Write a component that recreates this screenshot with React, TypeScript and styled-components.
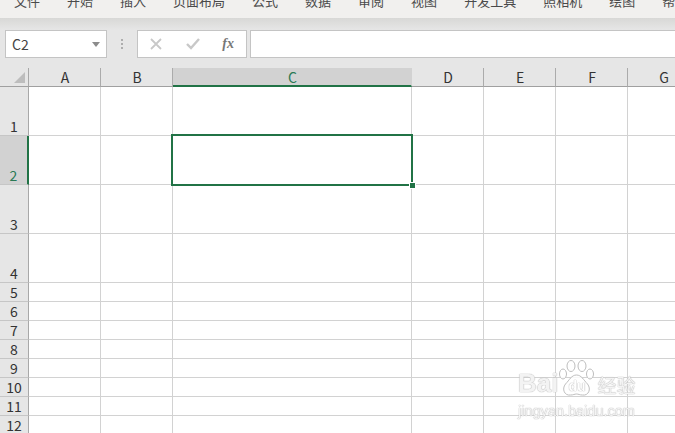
import React from "react";
import styled, { createGlobalStyle } from "styled-components";

const Global = createGlobalStyle`
  html, body { margin: 0; padding: 0; background: #e6e6e6; }
  #root { width: 675px; height: 433px; overflow: hidden; }
`;

const Page = styled.div`
  position: relative;
  width: 675px;
  height: 433px;
  overflow: hidden;
  display: flex;
  flex-direction: column;
  background: #e6e6e6;
  font-family: "Noto Sans CJK SC", "Liberation Sans", sans-serif;
`;

const Ribbon = styled.div`
  height: 18px;
  flex: none;
  box-sizing: border-box;
  background: #f1f0ee;
  display: flex;
  align-items: flex-end;
  gap: 27px;
  padding: 0 0 8px 14px;
  overflow: hidden;
`;

const Tab = styled.span`
  flex: none;
  font-size: 13px;
  line-height: 18px;
  color: #4a4a4a;
`;

const Shade = styled.div`
  height: 12px;
  flex: none;
  background: linear-gradient(#d8d8d6, #e6e6e6);
`;

const FormulaBar = styled.div`
  height: 28px;
  flex: none;
  display: flex;
  padding-left: 5px;
  margin-right: -3px;
`;

const Field = styled.div<{ $w?: number }>`
  box-sizing: border-box;
  height: 28px;
  width: ${(p) => (p.$w ? `${p.$w}px` : "auto")};
  flex: ${(p) => (p.$w ? "none" : "1")};
  background: #fff;
  border: 1px solid #c4c4c4;
  display: flex;
  align-items: center;
`;

const NameBox = styled(Field)`
  justify-content: space-between;
  padding: 0 5px 0 6px;
  font-family: "Noto Sans CJK SC", "Liberation Sans", sans-serif;
  font-size: 14px;
  color: #444;
`;

const Caret = styled.span`
  width: 0;
  height: 0;
  border-left: 4px solid transparent;
  border-right: 4px solid transparent;
  border-top: 5px solid #8c8c8c;
  margin-right: 1px;
`;

const Grip = styled.div`
  width: 31px;
  flex: none;
  display: flex;
  flex-direction: column;
  align-items: center;
  justify-content: center;
  gap: 2px;
  margin-left: -1px;
`;

const GripDot = styled.span`
  width: 2px;
  height: 2px;
  background: #adadad;
`;

const FxBox = styled(Field)`
  justify-content: space-between;
  padding: 0 12px 0 11px;
  margin-right: 3px;
`;

const Fx = styled.span`
  font-family: "Liberation Serif", serif;
  font-style: italic;
  font-weight: 700;
  font-size: 14px;
  color: #777;
`;

const SheetGap = styled.div`
  height: 10px;
  flex: none;
`;

const Sheet = styled.div`
  display: grid;
  grid-template-columns: 29px 72px 72px 239px 72px 72px 72px 72px;
  grid-template-rows: 19px repeat(4, 49px) repeat(8, 19px);
  flex: none;
  background: #fff;
  font-family: "Noto Sans CJK SC", "Liberation Sans", sans-serif;
`;

const Corner = styled.div`
  box-sizing: border-box;
  background: #e6e6e6;
  border-right: 1px solid #a8a8a8;
  border-bottom: 1px solid #a0a0a0;
  display: flex;
  align-items: flex-start;
  justify-content: flex-end;
  padding: 4px 3px 0 0;
`;

const CornerMark = styled.span`
  width: 11px;
  height: 11px;
  background: #bdbdbd;
  clip-path: polygon(100% 0, 100% 100%, 0 100%);
`;

const ColHead = styled.div<{ $active?: boolean }>`
  box-sizing: border-box;
  background: ${(p) => (p.$active ? "#d2d2d2" : "#e6e6e6")};
  border-right: 1px solid ${(p) => (p.$active ? "#d2d2d2" : "#ababab")};
  border-bottom: ${(p) => (p.$active ? "2px solid #217346" : "1px solid #a0a0a0")};
  color: ${(p) => (p.$active ? "#2a7a55" : "#333")};
  font-size: 14px;
  line-height: 19px;
  text-align: center;
  padding-left: 1px;
`;

const RowHead = styled.div<{ $active?: boolean }>`
  box-sizing: border-box;
  background: ${(p) => (p.$active ? "#d2d2d2" : "#e6e6e6")};
  border-right: ${(p) => (p.$active ? "2px solid #217346" : "1px solid #a8a8a8")};
  border-bottom: 1px solid #c6c6c6;
  color: ${(p) => (p.$active ? "#2a7a55" : "#333")};
  font-size: 14px;
  line-height: 18px;
  display: flex;
  align-items: flex-end;
  justify-content: center;
`;

const Cell = styled.div`
  position: relative;
  box-sizing: border-box;
  border-right: 1px solid #d2d2d2;
  border-bottom: 1px solid #d2d2d2;
`;

const Selection = styled.div`
  position: absolute;
  left: -2px;
  top: -2px;
  right: -2px;
  bottom: -2px;
  box-sizing: border-box;
  border: 2px solid #217346;
  z-index: 2;
`;

const Handle = styled.span`
  position: absolute;
  right: -4px;
  bottom: -4px;
  width: 5px;
  height: 5px;
  background: #217346;
  outline: 1px solid #fff;
`;

const Watermark = styled.div`
  position: absolute;
  left: 518px;
  top: 360px;
  width: 122px;
  height: 60px;
  z-index: 3;
  filter: blur(0.4px);
`;

const WordRow = styled.div`
  display: flex;
  align-items: flex-end;
  height: 38px;
`;

const Brand = styled.span`
  font-family: "Liberation Sans", sans-serif;
  font-weight: 700;
  font-size: 26px;
  line-height: 30px;
  color: rgba(255, 255, 255, 0.85);
  text-shadow: 0 0 1px #b0b0b0, 0 0 1px #b0b0b0;
`;

const Jing = styled.span`
  font-family: "Noto Sans CJK SC", sans-serif;
  font-size: 19px;
  line-height: 26px;
  margin-left: 2px;
  color: rgba(255, 255, 255, 0.85);
  text-shadow: 0 0 1px #b0b0b0, 0 0 1px #b0b0b0;
`;

const PawWrap = styled.div`
  position: relative;
  width: 37px;
  height: 38px;
  flex: none;
`;

const PawText = styled.span`
  position: absolute;
  left: 0;
  right: 0;
  bottom: 5px;
  text-align: center;
  font-family: "Liberation Sans", sans-serif;
  font-weight: 700;
  font-size: 14px;
  line-height: 14px;
  color: #fff;
  text-shadow: 0 0 1px #b0b0b0, 0 0 1px #b0b0b0;
`;

const Url = styled.div`
  font-family: "Liberation Sans", sans-serif;
  font-size: 14.5px;
  line-height: 16px;
  margin-top: 5px;
  white-space: nowrap;
  color: rgba(255, 255, 255, 0.85);
  text-shadow: 0 0 1px #b4b4b4, 0 0 1px #b4b4b4;
`;

const tabs = ["文件", "开始", "插入", "页面布局", "公式", "数据", "审阅", "视图", "开发工具", "照相机", "绘图", "帮助"];
const cols = ["A", "B", "C", "D", "E", "F", "G"];
const rows = [1, 2, 3, 4, 5, 6, 7, 8, 9, 10, 11, 12];

export default function App() {
  return (
    <Page>
      <Global />
      <Ribbon>
        {tabs.map((t) => (
          <Tab key={t}>{t}</Tab>
        ))}
      </Ribbon>
      <Shade />
      <FormulaBar>
        <NameBox $w={102}>
          C2
          <Caret />
        </NameBox>
        <Grip>
          <GripDot />
          <GripDot />
          <GripDot />
        </Grip>
        <FxBox $w={110}>
          <svg width="14" height="14" viewBox="0 0 14 14" fill="none" stroke="#c8c8c8" strokeWidth="1.8">
            <path d="M2 2l10 10M12 2L2 12" />
          </svg>
          <svg width="16" height="14" viewBox="0 0 16 14" fill="none" stroke="#c8c8c8" strokeWidth="2.4">
            <path d="M2 7l4 4 8-9" />
          </svg>
          <Fx>fx</Fx>
        </FxBox>
        <Field />
      </FormulaBar>
      <SheetGap />
      <Sheet>
        <Corner>
          <CornerMark />
        </Corner>
        {cols.map((c) => (
          <ColHead key={c} $active={c === "C"}>
            {c}
          </ColHead>
        ))}
        {rows.map((r) => (
          <React.Fragment key={r}>
            <RowHead $active={r === 2}>{r}</RowHead>
            {cols.map((c) => (
              <Cell key={c}>
                {r === 2 && c === "C" && (
                  <Selection>
                    <Handle />
                  </Selection>
                )}
              </Cell>
            ))}
          </React.Fragment>
        ))}
      </Sheet>
      <Watermark>
        <WordRow>
          <Brand>Bai</Brand>
          <PawWrap>
            <svg width="37" height="38" viewBox="0 0 37 38" fill="rgba(255,255,255,.85)" stroke="#bdbdbd" strokeWidth="1">
              <ellipse cx="5" cy="14" rx="3.5" ry="5" />
              <ellipse cx="13" cy="6" rx="4" ry="5.5" />
              <ellipse cx="24" cy="6" rx="4" ry="5.5" />
              <ellipse cx="32" cy="14" rx="3.5" ry="5" />
              <path d="M18.5 15c5 0 7 5 11 9 4 5 1 12-5 11-3 0-4-1-6-1s-3 1-6 1c-6 1-9-6-5-11 4-4 6-9 11-9z" />
            </svg>
            <PawText>du</PawText>
          </PawWrap>
          <Jing>经验</Jing>
        </WordRow>
        <Url>jingyan.baidu.com</Url>
      </Watermark>
    </Page>
  );
}
